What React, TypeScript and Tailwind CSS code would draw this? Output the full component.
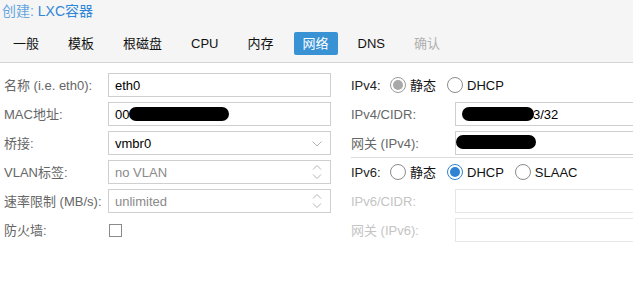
const font = "font-['Liberation_Sans','Noto_Sans_CJK_SC',sans-serif]";

const tabs = ["一般", "模板", "根磁盘", "CPU", "内存", "网络", "DNS", "确认"];

function Field({ label, children, disabled }: { label: string; children?: React.ReactNode; disabled?: boolean }) {
  return (
    <div className="flex h-6 items-center">
      <div className={`w-[104px] shrink-0 whitespace-nowrap ${disabled ? "text-[#c4c4c4]" : "text-[#666]"}`}>{label}</div>
      {children}
    </div>
  );
}

function Box({ children, disabled, wide }: { children?: React.ReactNode; disabled?: boolean; wide?: boolean }) {
  return (
    <div
      className={`relative flex h-6 items-center border px-[6px] ${wide ? "w-[260px] shrink-0" : "flex-1"} ${
        disabled ? "border-[#e6e6e6]" : "border-[#cfcfcf]"
      }`}
    >
      {children}
    </div>
  );
}

function ChevronDown() {
  return (
    <svg width="10" height="6" viewBox="0 0 10 6" className="absolute right-[8px] top-[9px]">
      <path d="M0.5 0.5 L5 5 L9.5 0.5" fill="none" stroke="#b5b5b5" strokeWidth="1" />
    </svg>
  );
}

function Spinner() {
  return (
    <svg width="10" height="16" viewBox="0 0 10 16" className="absolute right-[8px] top-[3px]">
      <path d="M1 5.5 L5 1.5 L9 5.5" fill="none" stroke="#b5b5b5" strokeWidth="1" />
      <path d="M1 10.5 L5 14.5 L9 10.5" fill="none" stroke="#b5b5b5" strokeWidth="1" />
    </svg>
  );
}

function Radio({ label, state }: { label: string; state: "off" | "gray" | "blue" }) {
  return (
    <div className="flex items-center gap-[4px]">
      <span
        className={`flex h-4 w-4 items-center justify-center rounded-full border ${
          state === "blue" ? "border-[#2f83d2]" : state === "gray" ? "border-[#9a9a9a]" : "border-[#8c8c8c]"
        }`}
      >
        {state !== "off" && (
          <span className={`h-[10px] w-[10px] rounded-full ${state === "blue" ? "bg-[#2f83d2]" : "bg-[#a8a8a8]"}`} />
        )}
      </span>
      <span className="text-[#111]">{label}</span>
    </div>
  );
}

function Blob({ w }: { w: number }) {
  return <span className="inline-block h-[14px] rounded-full bg-black" style={{ width: w }} />;
}

export default function App() {
  return (
    <div className={`${font} h-[290px] w-[633px] overflow-hidden bg-white text-[13px] leading-none`}>
      <div className="h-[63px] border-b border-[#d4d4d4] bg-[#f5f5f5]">
        <div className="pl-[2px] pt-[3px] text-[14px] leading-[16px]">
          <span className="text-[#67a6df]">创建: </span>
          <span className="text-[#2f87d5]">LXC容器</span>
        </div>
        <div className="ml-1 mt-[13px] flex gap-[11px]">
          {tabs.map((t) => (
            <div
              key={t}
              className={`flex h-[23px] items-center rounded-[2px] px-[9px] ${
                t === "网络" ? "bg-[#3892d4] text-white" : t === "确认" ? "text-[#b0b0b0]" : "text-[#111]"
              }`}
            >
              {t}
            </div>
          ))}
        </div>
      </div>

      <div className="flex pt-[10px]">
        <div className="flex w-[331px] shrink-0 flex-col gap-[5px] pl-1">
          <Field label="名称 (i.e. eth0):">
            <Box>eth0</Box>
          </Field>
          <Field label="MAC地址:">
            <Box>
              <span>00</span>
              <Blob w={100} />
            </Box>
          </Field>
          <Field label="桥接:">
            <Box>
              vmbr0
              <ChevronDown />
            </Box>
          </Field>
          <Field label="VLAN标签:">
            <Box>
              <span className="text-[#8a8a8a]">no VLAN</span>
              <Spinner />
            </Box>
          </Field>
          <Field label="速率限制 (MB/s):">
            <Box>
              <span className="text-[#8a8a8a]">unlimited</span>
              <Spinner />
            </Box>
          </Field>
          <Field label="防火墙:">
            <span className="ml-px h-[13px] w-[13px] border border-[#8a8a8a]" />
          </Field>
        </div>

        <div className="ml-4 flex shrink-0 flex-col pl-1">
          <div className="flex h-6 items-center">
            <span className="w-[39px] text-[#222]">IPv4:</span>
            <div className="flex gap-[11px]">
              <Radio label="静态" state="gray" />
              <Radio label="DHCP" state="off" />
            </div>
          </div>
          <div className="mt-[5px]">
            <Field label="IPv4/CIDR:">
              <Box wide>
                <Blob w={72} />
                <span className="-ml-[1px]">3/32</span>
              </Box>
            </Field>
          </div>
          <div className="mt-[5px]">
            <Field label="网关 (IPv4):">
              <Box wide>
                <span className="-ml-[6px]">
                  <Blob w={80} />
                </span>
              </Box>
            </Field>
          </div>
          <div className="mt-[2px] h-px w-[282px] bg-[#dcdcdc]" />
          <div className="mt-[2px] flex h-6 items-center">
            <span className="w-[39px] text-[#222]">IPv6:</span>
            <div className="flex gap-[11px]">
              <Radio label="静态" state="off" />
              <Radio label="DHCP" state="blue" />
              <Radio label="SLAAC" state="off" />
            </div>
          </div>
          <div className="mt-[5px]">
            <Field label="IPv6/CIDR:" disabled>
              <Box wide disabled />
            </Field>
          </div>
          <div className="mt-[5px]">
            <Field label="网关 (IPv6):" disabled>
              <Box wide disabled />
            </Field>
          </div>
        </div>
      </div>
    </div>
  );
}
